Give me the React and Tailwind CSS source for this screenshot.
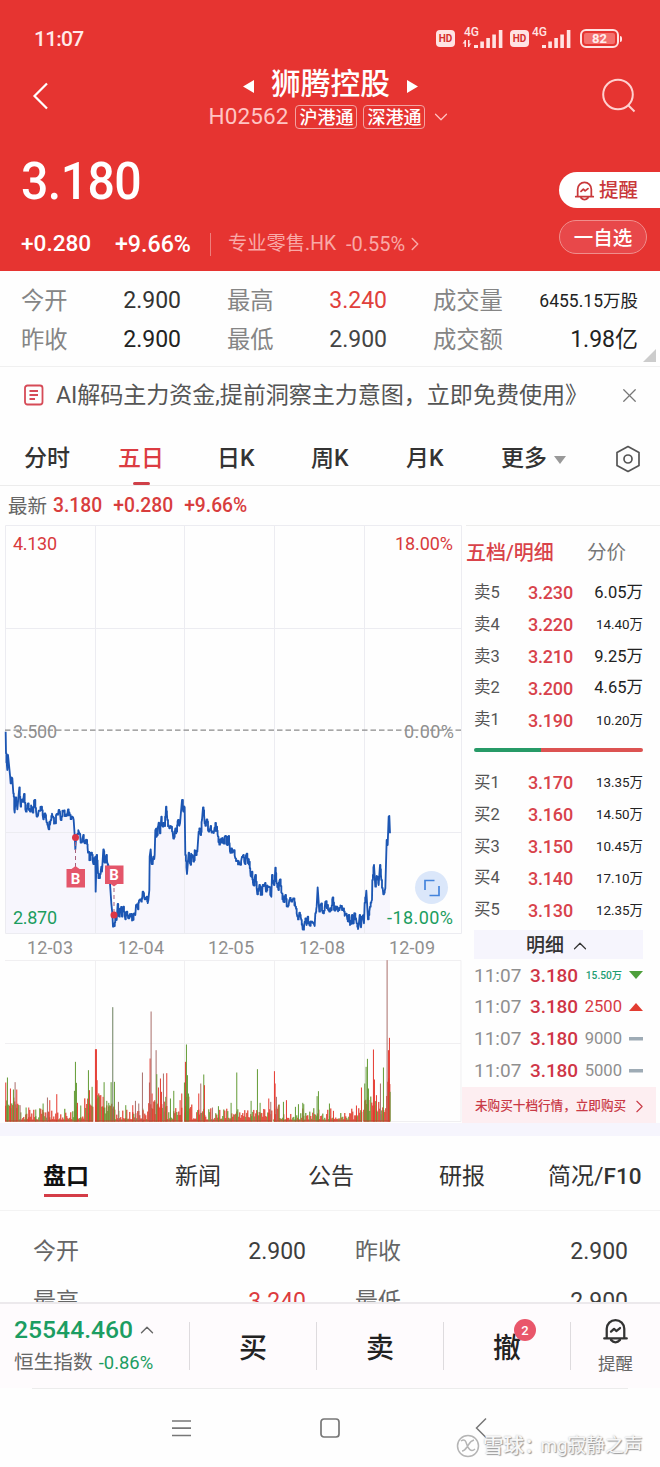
import { ChevronLeft, ChevronDown, ChevronRight, ChevronUp, X } from 'lucide-react';

const stats = [
  { label: '今开', value: '2.900', color: 'text-[#333]' },
  { label: '最高', value: '3.240', color: 'text-[#e0403c]' },
  { label: '成交量', value: '6455.15万股', color: 'text-[#222]', small: true },
  { label: '昨收', value: '2.900', color: 'text-[#222]' },
  { label: '最低', value: '2.900', color: 'text-[#444]' },
  { label: '成交额', value: '1.98亿', color: 'text-[#222]' },
];

const asks = [
  { label: '卖5', price: '3.230', volume: '6.05万' },
  { label: '卖4', price: '3.220', volume: '14.40万' },
  { label: '卖3', price: '3.210', volume: '9.25万' },
  { label: '卖2', price: '3.200', volume: '4.65万' },
  { label: '卖1', price: '3.190', volume: '10.20万' },
];

const bids = [
  { label: '买1', price: '3.170', volume: '13.35万' },
  { label: '买2', price: '3.160', volume: '14.50万' },
  { label: '买3', price: '3.150', volume: '10.45万' },
  { label: '买4', price: '3.140', volume: '17.10万' },
  { label: '买5', price: '3.130', volume: '12.35万' },
];

const trades = [
  { time: '11:07', price: '3.180', volume: '15.50万', dir: 'down' },
  { time: '11:07', price: '3.180', volume: '2500', dir: 'up' },
  { time: '11:07', price: '3.180', volume: '9000', dir: 'flat' },
  { time: '11:07', price: '3.180', volume: '5000', dir: 'flat' },
];

// x,y pairs of the five day line, in thirds of a pixel
const pricePoints = `17,35 18,100 22,150 24,105 30,165 32,190 37,175 40,220 44,278 47,232 52,268 58,202 62,260 66,238 72,222 78,275 84,250 90,275 95,262 98,278 104,240 110,290 116,272 124,260 130,298 134,280 140,308 146,328 152,300 158,290 164,305 170,282 176,270 182,300 190,275 196,288 204,268 210,285 216,290 221,300 224,345 226,388 229,345 238,340 242,368 250,345 254,370 260,360 264,398 270,420 274,398 280,432 286,410 287,515 290,405 294,460 298,474 304,440 306,455 310,388 314,428 318,408 322,430 326,440 330,490 334,550 337,580 339,620 343,618 347,595 350,600 353,552 358,590 362,565 366,590 370,560 376,598 380,575 386,595 392,590 398,600 402,580 406,585 408,555 414,568 418,540 424,545 428,515 434,538 440,530 445,540 448,510 449,410 452,388 455,432 460,410 464,405 466,330 472,345 476,308 480,340 484,290 488,320 494,318 498,260 502,300 508,325 514,320 520,356 526,325 530,335 534,300 540,310 546,240 550,275 554,262 556,405 561,462 566,398 570,430 575,405 580,425 586,392 592,395 596,335 602,345 606,300 609,262 614,310 620,298 626,335 632,318 636,335 644,322 650,320 654,350 658,374 664,355 670,370 676,348 682,375 686,348 690,395 694,385 700,395 706,415 712,422 718,430 726,410 730,405 734,430 738,405 744,430 748,425 752,468 756,455 760,495 766,465 772,523 778,495 784,523 788,495 794,492 798,515 804,500 814,530 816,465 822,495 826,443 830,490 835,510 840,478 846,520 850,545 856,525 862,560 868,540 874,545 882,535 886,560 892,590 898,578 904,600 908,628 914,605 920,615 923,590 928,615 934,605 944,618 946,580 950,560 953,502 958,575 964,550 970,580 976,545 982,555 988,575 994,570 998,532 1004,572 1010,560 1016,570 1024,558 1030,565 1036,582 1042,598 1046,585 1052,612 1056,585 1060,610 1064,580 1070,610 1076,618 1079,585 1083,622 1086,590 1092,610 1094,548 1099,512 1104,598 1110,560 1116,540 1117,480 1122,435 1126,500 1132,470 1136,495 1140,435 1144,480 1150,523 1156,505 1160,360 1163,375 1166,290 1168,288 1170,340`
  .split(' ')
  .map((pair) => pair.split(',').map(Number));

const random = (seed) => {
  const value = Math.sin(seed * 12.9898) * 43758.5453;
  return value - Math.floor(value);
};

// stepped ticks between the main turning points
const buildLine = () => {
  const points = [];
  pricePoints.forEach(([x, y], i) => {
    points.push([x, y]);
    const next = pricePoints[i + 1];
    if (next && next[0] - x > 3 && Math.abs(next[1] - y) < 60) {
      const third = (next[0] - x) / 3;
      const rise = (next[1] - y) / 3;
      const a = y + rise + (random(i) - 0.5) * 26;
      const b = y + rise * 2 + (random(i + 500) - 0.5) * 26;
      points.push([x + third, y], [x + third, a], [x + third * 2, a], [x + third * 2, b]);
    }
  });
  return points.map(([x, y]) => `${x.toFixed(1)},${y.toFixed(1)}`).join(' ');
};

const linePoints = buildLine();

// x,height,colour of the tall volume bars, in thirds of a pixel
const spikes = `17,117,r 22,132,g 31,99,r 40,96,g 45,118,m 50,96,r 60,49,m 78,42,g 86,42,r 107,36,g 129,54,g 142,72,m 149,64,r 170,82,r 226,179,g 223,92,g 229,116,g 232,56,r 242,48,g 265,154,g 268,94,r 276,104,g 286,217,r 289,217,r 291,124,r 293,79,g 296,74,g 312,118,g 309,74,r 320,62,g 326,56,g 333,118,g 338,343,d 343,119,g 355,59,m 377,49,g 398,49,r 406,62,m 416,54,m 427,147,m 429,34,r 448,117,m 450,189,r 453,330,m 456,84,r 464,64,r 468,214,m 470,142,g 475,102,r 481,129,r 484,89,r 490,144,m 500,145,r 497,74,g 511,69,g 521,92,g 540,64,r 545,84,r 553,117,g 556,179,r 559,231,g 562,139,g 565,84,g 596,84,r 602,114,m 611,141,g 613,109,r 637,42,m 655,46,g 693,56,g 710,147,g 753,62,g 772,157,g 780,56,g 806,69,r 812,59,m 823,151,r 825,114,r 829,74,m 837,51,g 850,59,g 859,64,r 886,44,g 895,52,g 908,56,g 911,52,g 951,76,g 955,91,g 988,54,g 1000,32,r 1069,48,r 1084,102,r 1094,114,g 1098,164,g 1102,188,g 1105,99,g 1120,216,r 1123,126,r 1129,79,r 1141,114,m 1150,162,g 1161,484,m 1165,214,r 1168,251,r 1170,89,g`
  .split(' ')
  .map((item) => item.split(','));

const volumeColors = { r: '#e5392f', g: '#639b35', m: '#a96f6b', d: '#6c805f' };

const busyRanges = [
  [15, 58, 75],
  [222, 232, 50],
  [252, 278, 70],
  [286, 302, 85],
  [303, 345, 55],
  [446, 500, 62],
  [525, 548, 50],
  [553, 575, 75],
  [592, 616, 40],
  [750, 815, 38],
  [822, 838, 55],
  [1092, 1112, 75],
  [1112, 1136, 70],
  [1136, 1158, 48],
  [1159, 1171, 190],
];

const volumeBars = [];
for (let x = 17; x < 1171; x += 3) {
  const closed = (x > 278 && x < 285) || (x > 547 && x < 552) || (x > 815 && x < 821) || (x > 1086 && x < 1091);
  if (closed) continue;
  const range = busyRanges.find(([from, to]) => x >= from && x <= to);
  const top = range ? range[2] : 24;
  const height = range ? top * (0.35 + random(x) * 0.65) : 6 + Math.pow(random(x), 2.2) * 34;
  volumeBars.push({ x, height, color: random(x + 77) > 0.32 ? '#e0402f' : '#6d9a35' });
}

function BellIcon({ size, className }) {
  return (
    <svg width={size} height={size} viewBox="0 0 24 24" fill="none" stroke="currentColor" strokeWidth="2" strokeLinecap="round" strokeLinejoin="round" className={className}>
      <path d="M4.200 18.500V10.500a7.800 7.800 0 0 1 15.600 0v8M2 19h20M8 20.500c2.300 2.600 5.700 2.600 8 0" />
      <path d="M8 13l2.700-2.500 2 2L16 9.800" />
    </svg>
  );
}

function Signal({ data }) {
  return (
    <svg width={data ? 42 : 40} height="23" viewBox={data ? '0 0 42 23' : '2 0 40 23'} fill="#ffe3e3">
      <text x="2" y="9.500" fontSize="12" fontFamily="Roboto" fontWeight="500">4G</text>
      {data && <path d="M2.500 14h1.500v7h-1.500zM0.500 17.500l2-2.500v2.500zM6 14h1.500v7H6zM7.500 18l2-1-2 3z" />}
      <path d="M12 19h4v3h-4zM18.300 15.500h3.600V22h-3.600zM24.300 12h3.600v10h-3.600zM30.300 8.500h3.600V22h-3.600zM36.800 4h3.600v18h-3.600z" />
    </svg>
  );
}

function HdBadge() {
  return (
    <span className="flex h-[17px] w-[19px] items-center justify-center rounded-[4px] bg-[#ffe3e3] text-[10px] font-bold text-[#d5302d]">HD</span>
  );
}

function Header() {
  return (
    <header className="h-[271px] bg-[#e63431] text-white">
      <div className="flex h-[60px] items-start pl-[34px] pt-[28px]">
        <span className="flex-1 text-[21px] leading-[23px] font-medium tracking-[-0.8px] text-[#ffeaea]">11:07</span>
        <div className="flex items-center pr-[38px]">
          <HdBadge />
          <span className="ml-[7px] -mt-[2px]"><Signal data /></span>
          <span className="ml-[6px]"><HdBadge /></span>
          <span className="ml-[3px] -mt-[2px]"><Signal /></span>
          <span className="ml-[8px] flex h-[19px] w-[39px] items-center rounded-[6px] border-2 border-[#ffe3e3] p-[2px]">
            <span className="flex h-full w-full items-center justify-center rounded-[2px] bg-[#f4706d] text-[13px] leading-none font-bold text-[#ffecec]">82</span>
          </span>
          <span className="ml-px h-[6px] w-[2px] rounded-r bg-[#ffe3e3]" />
        </div>
      </div>

      <div className="flex h-[75px] justify-between">
        <svg width="60" height="75" viewBox="0 0 60 75" fill="none" stroke="#fff" strokeWidth="2.200">
          <path d="M47 23.500L34.500 36l12.500 12.500" />
        </svg>
        <div className="ml-[1px] flex flex-col items-center pt-[6px]">
          <div className="flex h-[36px] items-center">
            <svg width="11" height="15" viewBox="0 0 11 15" fill="#fff" className="mt-[4px]"><path d="M11 1v13L0 7.500z" /></svg>
            <h1 className="mx-[17px] text-[29.7px] leading-none font-medium">狮腾控股</h1>
            <svg width="11" height="15" viewBox="0 0 11 15" fill="#fff" className="mt-[4px]"><path d="M0 1v13l11-6.500z" /></svg>
          </div>
          <div className="mt-px flex h-[28px] items-center">
            <span className="text-[22.5px] tracking-[0.1px] text-[#ffc4c3]">H02562</span>
            <span className="ml-[7px] flex h-[24px] w-[62px] items-center justify-center rounded-[4px] border border-[#f3a3a1] pt-px text-[18px] font-medium">沪港通</span>
            <span className="ml-[6px] flex h-[24px] w-[62px] items-center justify-center rounded-[4px] border border-[#f3a3a1] pt-px text-[18px] font-medium">深港通</span>
            <ChevronDown size={22} strokeWidth={1.3} className="ml-[5px] text-[#ffc4c3]" />
          </div>
        </div>
        <svg width="60" height="75" viewBox="0 0 60 75" fill="none" stroke="#ffd0cf" strokeWidth="2">
          <circle cx="18" cy="34.500" r="14.800" />
          <path d="M28.500 45.500l6 6" />
        </svg>
      </div>

      <div className="flex justify-between">
        <div className="pl-[21px]">
          <div className="flex h-[92px] origin-left scale-x-[0.945] items-center text-[51px] leading-none font-medium tracking-[-0.6px]">3.180</div>
          <div className="flex h-[34px] items-center">
            <span className="w-[94px] text-[22.6px] font-medium">+0.280</span>
            <span className="w-[95px] text-[23.2px] font-medium">+9.66%</span>
            <span className="h-[23px] w-px bg-[#ee7f7c]" />
            <span className="ml-[17px] text-[19.3px] text-[#f9a9a7]">专业零售.HK</span>
            <span className="ml-[10px] text-[20px] text-[#f9a9a7]">-0.55%</span>
            <ChevronRight size={22} strokeWidth={1.6} className="-ml-px text-[#f9a9a7]" />
          </div>
        </div>
        <div className="flex w-[101px] flex-col pt-[37px]">
          <button className="flex h-[36px] items-center rounded-l-full bg-white pl-[15px] pt-px text-[19.5px] font-medium text-[#c9383a]">
            <BellIcon size={21} className="mr-[4px]" />提醒
          </button>
          <button className="mt-[12px] flex h-[34px] w-[88px] items-center justify-center rounded-full border border-[#f08e8c] bg-[#e8484a] pt-[3px] text-[19.5px] font-medium">一自选</button>
        </div>
      </div>
    </header>
  );
}

function Stats() {
  return (
    <section className="relative grid h-[96px] grid-cols-[206px_206px_1fr] grid-rows-[39px_39px] border-b border-[#f0f0f0] pl-[21px] pr-[22px] pt-[11px]">
      {stats.map((item) => (
        <div key={item.label} className="flex items-center justify-between nth-[3n+1]:pr-[46px] nth-[3n+2]:pr-[46px]">
          <span className="text-[23.3px] text-[#858585]">{item.label}</span>
          <span className={`${item.color} ${item.small ? 'text-[17.5px]' : 'text-[23px]'}`}>{item.value}</span>
        </div>
      ))}
      <svg width="13" height="13" className="absolute bottom-[4px] right-[4px]"><path d="M13 0v13H0z" fill="#ccc" /></svg>
    </section>
  );
}

function Banner() {
  return (
    <section className="flex h-[64px] items-center pb-[8px] pl-[24px] pr-[19px]">
      <svg width="20" height="22" viewBox="0 0 20 22" fill="none" stroke="#d64b57" strokeWidth="1.800">
        <rect x="1" y="1.500" width="17.500" height="19" rx="2.500" />
        <path d="M5.500 7h8.500M5.500 11h8.500M5.500 15h5.500" />
      </svg>
      <span className="ml-[12px] flex-1 pt-[2px] text-[23.100px] tracking-[-0.08px] whitespace-nowrap text-[#555]">AI解码主力资金,提前洞察主力意图，立即免费使用》</span>
      <X size={23} strokeWidth={1.3} className="text-[#777]" />
    </section>
  );
}

function PeriodTabs() {
  return (
    <nav className="flex h-[55px] items-center border-b border-[#ececec] pt-[3px] text-[23px] text-[#333]">
      <span className="ml-[24px] w-[94px] font-medium">分时</span>
      <span className="relative w-[99px] font-medium text-[#dc3c42]">
        五日
        <span className="absolute -bottom-[8px] left-[15px] h-[3px] w-[17px] rounded bg-[#cf4048]" />
      </span>
      <span className="w-[94px] font-medium">日K</span>
      <span className="w-[95px] font-medium">周K</span>
      <span className="w-[95px] font-medium">月K</span>
      <span className="font-medium">更多</span>
      <svg width="12" height="8" viewBox="0 0 12 8" className="ml-[7px]"><path d="M0 0h12L6 8z" fill="#999" /></svg>
      <svg width="26" height="28" viewBox="0 0 26 28" fill="none" stroke="#555" strokeWidth="1.700" className="ml-auto mr-[19px] -mt-[2px]">
        <path d="M13 1.500L24 7.500v13L13 26.500 2 20.500v-13z" strokeLinejoin="round" />
        <circle cx="13" cy="14" r="4" />
      </svg>
    </nav>
  );
}

function Marker({ x, y, flip }) {
  return (
    <g>
      <rect x={x - 9} y={y - 9} width="18.500" height="18.500" fill="#e4566a" />
      <path d={flip ? `M${x - 4} ${y + 9}h8l-4 3z` : `M${x - 4} ${y - 9}h8l-4-3z`} fill="#e4566a" />
      <text x={x} y={y + 5.5} textAnchor="middle" fontSize="15" fontWeight="700" fill="#fff">B</text>
    </g>
  );
}

function PriceChart() {
  return (
    <svg width="466" height="435" viewBox="0 525 466 435" fontFamily='Roboto, "Noto Sans CJK SC", sans-serif' fontSize="18">
      <g transform="translate(0 720) scale(0.33333)">
        <polygon points={`17,639 ${linePoints} 1170,639`} fill="#f7f6fd" />
      </g>
      <path d="M5.500 525.500h456v408h-456zM95.500 525v408M184.500 525v408M274.500 525v408M364.500 525v408M5 628.500h456M5 832.500h456" fill="none" stroke="#ececf1" />
      <path d="M5 730.200h456" stroke="#8b8b8b" strokeWidth="1.300" strokeDasharray="5.500 3" />
      <g transform="translate(0 720) scale(0.33333)">
        <polyline points={linePoints} fill="none" stroke="#1c56b3" strokeWidth="5.500" strokeLinejoin="round" />
      </g>

      <path d="M75.500 842v26M114 888v24" stroke="#a6607c" strokeDasharray="4 3" />
      <circle cx="75.500" cy="837.500" r="3.500" fill="#dc3545" />
      <circle cx="114" cy="915" r="3.500" fill="#dc3545" />
      <Marker x={75.5} y={878} />
      <Marker x={114} y={874.5} flip />

      <circle cx="431.500" cy="887.500" r="16.500" fill="#dbe7fa" />
      <path d="M425 890v-9.500h9.500M429.500 895.500H439V886" fill="none" stroke="#4484dc" strokeWidth="1.700" />

      <text x="13" y="550" textLength="44" fill="#d83a3c">4.130</text>
      <text x="13" y="738" textLength="44" fill="#8f8f8f">3.500</text>
      <text x="13" y="924" textLength="44" fill="#1c9d5f">2.870</text>
      <text x="395" y="550" textLength="58" fill="#d83a3c">18.00%</text>
      <text x="404" y="738" textLength="50" fill="#8f8f8f">0.00%</text>
      <text x="387" y="924" textLength="66" fill="#1c9d5f">-18.00%</text>

      <g fill="#8f8f8f">
        <text x="27" y="954" textLength="46">12-03</text>
        <text x="118" y="954" textLength="46">12-04</text>
        <text x="208" y="954" textLength="46">12-05</text>
        <text x="299" y="954" textLength="46">12-08</text>
        <text x="389" y="954" textLength="46">12-09</text>
      </g>
    </svg>
  );
}

function VolumeChart() {
  return (
    <svg width="466" height="163" viewBox="0 960 466 163">
      <path d="M5 960.500h456v161h-456M95.500 960v161M184.500 960v161M274.500 960v161M364.500 960v161M5 1043.500h456" fill="none" stroke="#f0eff1" />
      {volumeBars.map((bar) => (
        <rect key={bar.x} x={bar.x / 3 - 0.5} y={1121.5 - bar.height / 3} width="1.200" height={bar.height / 3} fill={bar.color} />
      ))}
      {spikes.map(([x, height, color]) => (
        <rect key={x} x={x / 3 - 0.4} y={1121.5 - height / 3} width="1" height={height / 3} fill={volumeColors[color]} />
      ))}
      <path d="M5.500 1121h87.500M95 1121h87.500M184.500 1121h87.500M274 1121h88M363.500 1121h26.500" stroke="#b8452c" strokeWidth="1.200" />
    </svg>
  );
}

function OrderRow({ row }) {
  return (
    <div className="flex h-[31.8px] items-center">
      <span className="w-[54px] pt-px text-[16.5px] text-[#555]">{row.label}</span>
      <span className="text-[18px] font-medium tracking-[-0.2px] text-[#d8424b]">{row.price}</span>
      <span className={`ml-auto pt-px text-[#222] ${row.volume.length > 5 ? 'text-[13.4px]' : 'text-[16.5px]'}`}>{row.volume}</span>
    </div>
  );
}

function TradeRow({ row }) {
  const color = row.dir === 'down' ? 'text-[#1c9d72]' : row.dir === 'up' ? 'text-[#d63a44]' : 'text-[#8f8f8f]';
  return (
    <div className="flex h-[31.8px] items-center pt-[2px]">
      <span className="w-[56px] text-[19px] text-[#8f8f8f]">{row.time}</span>
      <span className="text-[19px] font-medium tracking-[-0.1px] text-[#cf3546]">{row.price}</span>
      <span className={`ml-auto mr-[7px] ${color} ${row.volume.length > 5 ? 'text-[10.2px] font-medium' : 'text-[16.6px]'}`}>{row.volume}</span>
      <svg width="14" height="8" viewBox="0 0 14 8" className="-mt-px">
        {row.dir === 'down' && <path d="M0 0h14L7 8z" fill="#4d9f3b" />}
        {row.dir === 'up' && <path d="M0 8h14L7 0z" fill="#e23c31" />}
        {row.dir === 'flat' && <path d="M0 2h14v3.500H0z" fill="#9eabb5" />}
      </svg>
    </div>
  );
}

function OrderBook() {
  return (
    <aside className="w-[194px] border-t border-[#ededed]">
      <div className="flex h-[51px] items-center pt-[2px]">
        <span className="w-[121px] text-[20px] font-medium text-[#d9434a]">五档/明细</span>
        <span className="text-[19.5px] text-[#777]">分价</span>
      </div>
      <div className="pl-[8px] pr-[17px]">
        {asks.map((row) => <OrderRow key={row.label} row={row} />)}
        <div className="flex h-[31px] items-center pb-[3px]">
          <span className="h-[4px] w-[67px] rounded-l-full bg-[#279a67]" />
          <span className="h-[4px] flex-1 rounded-r-full bg-[#dc5352]" />
        </div>
        {bids.map((row) => <OrderRow key={row.label} row={row} />)}
        <div className="mt-[4px] flex h-[29px] items-center justify-center bg-[#f6f5fd] pt-[3px] text-[19px] font-medium text-[#333]">
          明细
          <ChevronUp size={22} strokeWidth={1.3} className="ml-[5px]" />
        </div>
        {trades.map((row, i) => <TradeRow key={i} row={row} />)}
      </div>
      <div className="mt-px -ml-[4px] mr-[4px] flex h-[36px] items-center bg-[#fdeef1] pl-[13px] pt-[2px] text-[12.6px] font-medium whitespace-nowrap text-[#c93a46]">
        未购买十档行情，立即购买
        <ChevronRight size={21} strokeWidth={1.3} className="ml-[3px]" />
      </div>
    </aside>
  );
}

function Details() {
  return (
    <>
      <nav className="flex h-[75px] items-center border-b border-[#f3f3f3] pt-[8px] text-[23px] text-[#333]">
        <span className="relative ml-[43px] w-[132px] font-bold text-[#111]">
          盘口
          <span className="absolute -bottom-[3px] left-[1px] h-[3px] w-[44px] bg-[#d43c47]" />
        </span>
        <span className="w-[133px]">新闻</span>
        <span className="w-[131px]">公告</span>
        <span className="w-[109px]">研报</span>
        <span className="whitespace-nowrap">简况/<span className="text-[22.500px] font-medium">F10</span></span>
      </nav>
      <section className="grid h-[91px] grid-cols-[273px_273px] content-start gap-x-[49px] overflow-hidden pl-[33px] pt-[16px] text-[23px] text-[#3d3d3d]">
        <Detail label="今开" value="2.900" />
        <Detail label="昨收" value="2.900" />
        <Detail label="最高" value="3.240" red />
        <Detail label="最低" value="2.900" />
      </section>
    </>
  );
}

function Detail({ label, value, red }) {
  return (
    <div className="flex h-[50px] items-center justify-between">
      <span className="text-[#666]">{label}</span>
      <span className={red ? 'text-[#dc3b3f]' : ''}>{value}</span>
    </div>
  );
}

function TradeBar() {
  return (
    <footer className="flex h-[86px] items-center border-t-2 border-[#ece9ec] bg-[#fefbfd]">
      <div className="w-[189px] pl-[14px]">
        <div className="flex h-[32px] items-center text-[24.7px] font-medium text-[#1c9d62]">
          25544.460
          <ChevronUp size={22} strokeWidth={1.5} className="ml-[3px] text-[#666]" />
        </div>
        <div className="flex h-[32px] items-center pt-px">
          <span className="text-[19.7px] text-[#666]">恒生指数</span>
          <span className="ml-[6px] text-[18.4px] text-[#1c9d62]">-0.86%</span>
        </div>
      </div>
      <button className="h-[48px] w-[127px] border-l border-[#dedbde] pt-[5px] text-[28px] leading-none font-medium text-[#222]">买</button>
      <button className="h-[48px] w-[127px] border-l border-[#dedbde] pt-[5px] text-[28px] leading-none font-medium text-[#222]">卖</button>
      <button className="relative h-[48px] w-[127px] border-l border-[#dedbde] pt-[5px] text-[28px] leading-none font-medium text-[#222]">
        撤
        <span className="absolute left-[70px] -top-[3px] flex size-[22px] items-center justify-center rounded-full bg-[#e9566a] text-[13px] text-white">2</span>
      </button>
      <div className="flex h-[48px] flex-1 flex-col items-center justify-center border-l border-[#dedbde]">
        <BellIcon size={27} className="shrink-0 text-[#333]" />
        <span className="mt-[8px] text-[17.5px] leading-[24px] text-[#666]">提醒</span>
      </div>
    </footer>
  );
}

function SystemNav() {
  return (
    <div className="relative h-[79px]">
      <div className="mx-[32px] h-px bg-[#ececec]" />
      <div className="flex h-[78px] items-center">
        <svg width="19" height="18" viewBox="0 0 19 18" stroke="#777" strokeWidth="1.700" className="ml-[172px]"><path d="M0 2h19M0 9.200h19M0 16.500h19" /></svg>
        <svg width="20" height="20" viewBox="0 0 20 20" fill="none" stroke="#777" strokeWidth="1.700" className="ml-[129px]"><rect x="1" y="1" width="18" height="18" rx="3" /></svg>
        <svg width="12" height="22" viewBox="0 0 12 22" fill="none" stroke="#777" strokeWidth="1.500" className="ml-[135px]"><path d="M11 1.500L1.500 11l9.500 9.500" /></svg>
      </div>
      <div className="absolute left-[456px] top-[44px] flex h-[28px] items-center text-[18.8px] whitespace-nowrap text-[#f7f7f7] [text-shadow:1px_1px_1px_#999,0_0_2px_#bbb]">
        <svg width="24" height="24" viewBox="0 0 24 24" fill="none" stroke="#b5b5b5" strokeWidth="1.500">
          <circle cx="12" cy="12" r="10.500" />
          <path d="M5 7c4-3 5 1 6 4s4 8 8 4M18 6c-4 1-5 4-7 7s-3 4-5 4" />
        </svg>
        <span className="ml-[3px] text-[20.5px] font-medium">雪球：</span>
        <span className="-ml-[4px]">mg寂静之声</span>
      </div>
    </div>
  );
}

export default function App() {
  return (
    <div className="h-[1467px] w-[660px] overflow-hidden bg-[#fefefe] font-[Roboto,'Noto_Sans_CJK_SC',sans-serif]">
      <Header />
      <Stats />
      <Banner />
      <PeriodTabs />
      <div className="flex h-[39px] items-center pl-[8px] pt-[2px] text-[19.3px] text-[#d83d3d]">
        <span className="text-[19.500px] text-[#666]">最新</span>
        <span className="ml-[6px] font-medium">3.180</span>
        <span className="ml-[11px] font-medium">+0.280</span>
        <span className="ml-[11px] font-medium">+9.66%</span>
      </div>
      <main className="flex h-[598px]">
        <div className="w-[466px]">
          <div className="h-[435px]"><PriceChart /></div>
          <div className="h-[163px]"><VolumeChart /></div>
        </div>
        <OrderBook />
      </main>
      <div className="h-[13px] bg-[#f6f5fd]" />
      <Details />
      <TradeBar />
      <SystemNav />
    </div>
  );
}
